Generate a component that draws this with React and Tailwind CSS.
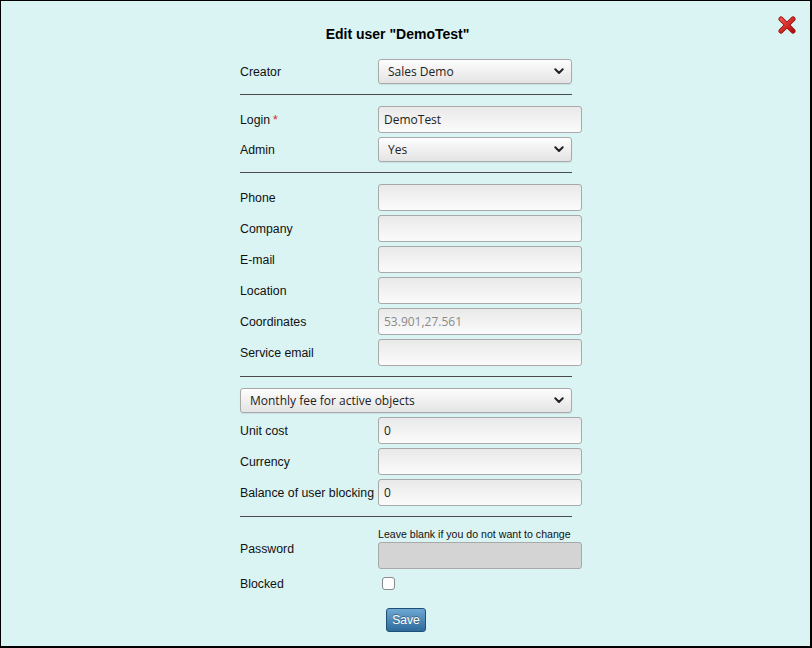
import React from 'react';

const fontUi = { fontFamily: '"Liberation Sans", Arial, sans-serif' };
const fontField = { fontFamily: '"Open Sans", "Noto Sans", sans-serif' };

const Chevron = () => (
    <svg className="w-[10px] h-[7px] shrink-0" viewBox="0 0 10 7" fill="none">
        <path d="M1.3 1.3 L5 5 L8.7 1.3" stroke="#222" strokeWidth="2" strokeLinecap="round" strokeLinejoin="round" />
    </svg>
);

const Select = ({ value, wide }) => (
    <div
        style={fontField}
        className={`${wide ? 'w-[332px]' : 'w-[194px]'} h-[25px] flex items-center justify-between pl-[9px] pr-[7px] border border-[#a9a9a9] rounded-[3px] bg-gradient-to-b from-[#fdfdfd] to-[#e4e4e4] text-[12px] text-[#222] shadow-[0_1px_1px_rgba(0,0,0,0.08)]`}
    >
        <span>{value}</span>
        <Chevron />
    </div>
);

const Input = ({ value = '', muted, gray }) => (
    <div
        style={fontField}
        className={`w-[204px] h-[27px] flex items-center pl-[5px] border border-[#a9a9a9] rounded-[3px] text-[12px] ${
            gray ? 'bg-[#d4d4d4]' : 'bg-gradient-to-b from-[#e9e9e9] to-[#fbfbfb]'
        } ${muted ? 'text-[#8a8a8a]' : 'text-[#222]'}`}
    >
        {value}
    </div>
);

const Row = ({ label, required, children }) => (
    <div className="flex items-center">
        <div className="w-[138px] shrink-0 text-[12.3px] leading-[18px] pt-[1px] text-[#111]">
            {label}
            {required && <span className="text-[#e02020] ml-[3px]">*</span>}
        </div>
        {children}
    </div>
);

const Separator = () => <div className="w-[332px] h-px bg-[#4a4a4a] mt-[10px] mb-[11px]" />;

const CloseIcon = () => (
    <svg className="w-[18px] h-[18px]" viewBox="0 0 18 18">
        <defs>
            <linearGradient id="xg" x1="0" y1="0" x2="1" y2="1">
                <stop offset="0" stopColor="#f0504a" />
                <stop offset="1" stopColor="#b80e0e" />
            </linearGradient>
        </defs>
        <path d="M3 3 L15 15 M15 3 L3 15" stroke="#9a0a0a" strokeWidth="5" strokeLinecap="round" />
        <path d="M3 3 L15 15 M15 3 L3 15" stroke="url(#xg)" strokeWidth="3.4" strokeLinecap="round" />
    </svg>
);

export default function App() {
    return (
        <div style={fontUi} className="w-[812px] h-[648px] bg-[#daf4f4] border-t border-l border-r-2 border-b-2 border-black relative overflow-hidden">
            {/* close button */}
            <div className="absolute top-[15px] right-[14px]">
                <CloseIcon />
            </div>

            <div className="flex flex-col">
                <h1 className="mt-[25px] text-[14px] font-bold text-black leading-[16px] text-center pr-[16px]">Edit user "DemoTest"</h1>

                <div className="w-[342px] ml-[239px] mt-[17px] flex flex-col">
                    <Row label="Creator">
                        <Select value="Sales Demo" />
                    </Row>
                    <Separator />

                    <div className="flex flex-col gap-[4px]">
                        <Row label="Login" required>
                            <Input value="DemoTest" />
                        </Row>
                        <Row label="Admin">
                            <Select value="Yes" />
                        </Row>
                    </div>
                    <Separator />

                    <div className="flex flex-col gap-[4px]">
                        <Row label="Phone"><Input /></Row>
                        <Row label="Company"><Input /></Row>
                        <Row label="E-mail"><Input /></Row>
                        <Row label="Location"><Input /></Row>
                        <Row label="Coordinates"><Input value="53.901,27.561" muted /></Row>
                        <Row label="Service email"><Input /></Row>
                    </div>
                    <Separator />

                    <div className="flex flex-col gap-[4px]">
                        <Select value="Monthly fee for active objects" wide />
                        <Row label="Unit cost"><Input value="0" /></Row>
                        <Row label="Currency"><Input /></Row>
                        <Row label="Balance of user blocking"><Input value="0" /></Row>
                    </div>
                    <Separator />

                    <Row label="Password">
                        <div className="flex flex-col">
                            <div className="text-[10.6px] text-[#111] leading-[12px] mb-[2px] whitespace-nowrap">Leave blank if you do not want to change</div>
                            <Input gray />
                        </div>
                    </Row>

                    <div className="mt-[3px] h-[23px]">
                        <Row label="Blocked">
                            <div className="h-[23px] flex items-center pl-[4px]">
                                <div className="w-[13px] h-[13px] border border-[#8a8a8a] rounded-[3px] bg-white" />
                            </div>
                        </Row>
                    </div>

                    <div className="pl-[146px] mt-[13px]">
                        <button className="w-[40px] h-[24px] rounded-[3px] border border-[#1f4f75] bg-gradient-to-b from-[#6ea8d4] to-[#2d6b9c] text-white text-[12px] [text-shadow:0_-1px_0_rgba(0,0,0,0.35)] flex items-center justify-center">
                            Save
                        </button>
                    </div>
                </div>
            </div>
        </div>
    );
}
